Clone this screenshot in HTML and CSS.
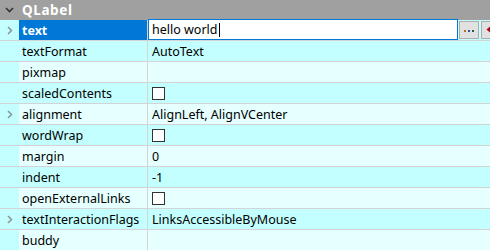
FILE: index.html
```html
<!DOCTYPE html>
<html lang="en">
<head>
    <meta charset="UTF-8">
    <title>Property Editor</title>
    <link rel="stylesheet" href="styles.css">
</head>
<body>
    <div class="editor">
        <div class="group">
            <span class="arrow down">
                <svg width="9" height="6" viewBox="0 0 9 6"><path d="M1 1 L4.5 4.5 L8 1" fill="none" stroke="#333" stroke-width="1.6"/></svg>
            </span>
            <span class="group-name">QLabel</span>
        </div>

        <div class="row dark">
            <span class="branch">
                <svg width="6" height="9" viewBox="0 0 6 9"><path d="M1 1 L4.5 4.5 L1 8" fill="none" stroke="#8a9a9a" stroke-width="1.6"/></svg>
            </span>
            <span class="name selected">text</span>
            <span class="value editing">
                <span class="line-edit">hello world<span class="caret"></span></span>
                <span class="tool-btn">
                    <svg width="11" height="3" viewBox="0 0 11 3"><rect x="0" y="0" width="2" height="2" fill="#b07020"/><rect x="4" y="0" width="2" height="2" fill="#3050a0"/><rect x="8" y="0" width="2" height="2" fill="#206040"/></svg>
                </span>
                <span class="tool-btn reset">
                    <svg width="10" height="9" viewBox="0 0 10 9"><path d="M4 0.5 L0.5 3.5 L4 6.5 Z" fill="#a01010"/><path d="M3.5 3.5 H7 Q9 3.5 9 5.5 V8.5" fill="none" stroke="#a01010" stroke-width="2"/></svg>
                </span>
            </span>
        </div>

        <div class="row light">
            <span class="branch"></span>
            <span class="name">textFormat</span>
            <span class="value">AutoText</span>
        </div>
        <div class="row dark2">
            <span class="branch"></span>
            <span class="name">pixmap</span>
            <span class="value"></span>
        </div>
        <div class="row light">
            <span class="branch"></span>
            <span class="name">scaledContents</span>
            <span class="value"><span class="check"></span></span>
        </div>
        <div class="row dark2">
            <span class="branch">
                <svg width="6" height="9" viewBox="0 0 6 9"><path d="M1 1 L4.5 4.5 L1 8" fill="none" stroke="#8a9a9a" stroke-width="1.6"/></svg>
            </span>
            <span class="name">alignment</span>
            <span class="value">AlignLeft, AlignVCenter</span>
        </div>
        <div class="row light">
            <span class="branch"></span>
            <span class="name">wordWrap</span>
            <span class="value"><span class="check"></span></span>
        </div>
        <div class="row dark2">
            <span class="branch"></span>
            <span class="name">margin</span>
            <span class="value">0</span>
        </div>
        <div class="row light">
            <span class="branch"></span>
            <span class="name">indent</span>
            <span class="value">-1</span>
        </div>
        <div class="row dark2">
            <span class="branch"></span>
            <span class="name">openExternalLinks</span>
            <span class="value"><span class="check"></span></span>
        </div>
        <div class="row light">
            <span class="branch">
                <svg width="6" height="9" viewBox="0 0 6 9"><path d="M1 1 L4.5 4.5 L1 8" fill="none" stroke="#8a9a9a" stroke-width="1.6"/></svg>
            </span>
            <span class="name">textInteractionFlags</span>
            <span class="value">LinksAccessibleByMouse</span>
        </div>
        <div class="row dark2">
            <span class="branch"></span>
            <span class="name">buddy</span>
            <span class="value"></span>
        </div>
    </div>
</body>
</html>
```

FILE: styles.css
```css
* {
    margin: 0;
    padding: 0;
    box-sizing: border-box;
}

body {
    font-family: 'Noto Sans', 'Open Sans', sans-serif;
    font-size: 12.5px;
    color: #000;
    background-color: #e6ffff;
    overflow: hidden;
}

.editor {
    width: 490px;
}

.group {
    display: flex;
    align-items: center;
    height: 20px;
    background-color: #a0a0a0;
}

.group .arrow {
    width: 19px;
    display: flex;
    justify-content: center;
}

.group-name {
    padding-left: 3px;
    color: #fff;
    font-weight: bold;
    font-size: 13.5px;
    letter-spacing: 0.6px;
}

.row {
    display: flex;
    height: 21px;
    border-bottom: 1px solid #d4d4d4;
}

.row.light .name,
.row.light .value {
    background-color: #c4ffff;
}

.row.dark2 .name,
.row.dark2 .value {
    background-color: #e6ffff;
}

.branch {
    width: 19px;
    flex-shrink: 0;
    display: flex;
    align-items: center;
    justify-content: center;
    background-color: #c4ffff;
}

.name {
    width: 129px;
    flex-shrink: 0;
    padding-left: 3px;
    display: flex;
    align-items: center;
    border-right: 1px solid #d4d4d4;
    white-space: nowrap;
}

.name.selected {
    background-color: #0078d7;
    color: #fff;
    font-weight: bold;
}

.value {
    flex: 1;
    display: flex;
    align-items: center;
    padding-left: 4px;
    white-space: nowrap;
    background-color: #c4ffff;
}

.value.editing {
    padding-left: 0;
    background-color: #c4ffff;
    gap: 1px;
}

.line-edit {
    width: 310px;
    height: 21px;
    margin-top: -1px;
    display: flex;
    align-items: center;
    padding-left: 3px;
    background-color: #fff;
    border: 1px solid #0078d7;
    white-space: pre;
}

.caret {
    display: inline-block;
    width: 1px;
    height: 14px;
    margin-left: 1px;
    background-color: #000;
}

.tool-btn {
    width: 20px;
    height: 18px;
    display: flex;
    align-items: flex-end;
    justify-content: center;
    padding-bottom: 5px;
    background-color: #e1e1e1;
    border: 1px solid #adadad;
}

.tool-btn.reset {
    align-items: center;
    padding-bottom: 0;
    margin-left: 1px;
}

.check {
    width: 13px;
    height: 13px;
    border: 1px solid #333;
    background-color: #fff;
}
```
